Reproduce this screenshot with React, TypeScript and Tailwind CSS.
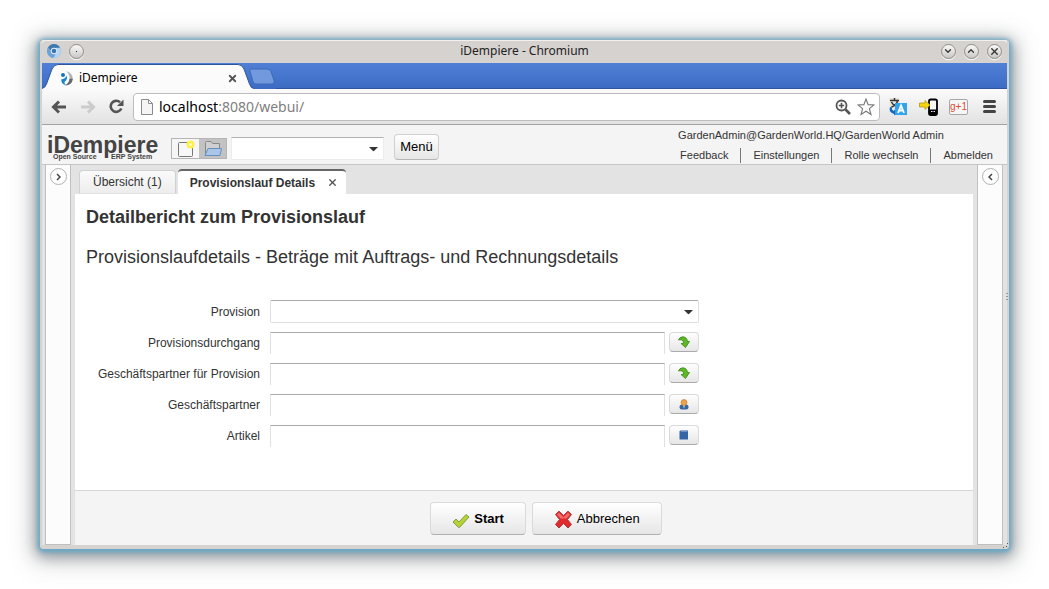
import { useState } from "react";
import type { ReactNode } from "react";
import { ChevronDown, ChevronUp, X } from "lucide-react";

const HEADER_LINKS = ["Feedback", "Einstellungen", "Rolle wechseln", "Abmelden"] as const;

const LOOKUP_FIELDS = [
  { id: "commissionRun", label: "Provisionsdurchgang", icon: "zoom" },
  { id: "commissionPartner", label: "Geschäftspartner für Provision", icon: "zoom" },
  { id: "partner", label: "Geschäftspartner", icon: "partner" },
  { id: "product", label: "Artikel", icon: "product" },
] as const;

function ChromiumIcon() {
  return (
    <svg width="14" height="14" viewBox="0 0 14 14" aria-hidden="true">
      <circle cx="7" cy="7" r="7" fill="#7db0e0" />
      <path d="M1 3.4A7 7 0 0 1 13 3.6L7 4Q4.500 4 4 6.500z" fill="#3f79ad" />
      <path d="M1 3.400L4 8.500Q5.500 10.500 8 10L6.500 14A7 7 0 0 1 1 3.400z" fill="#6ba2da" />
      <path d="M7 4h6.200A7 7 0 0 1 6.500 14L9.800 8.500z" fill="#b4d5f4" />
      <circle cx="7" cy="7" r="3.200" fill="#e4effa" />
      <circle cx="7" cy="7" r="2.300" fill="#3a78b5" />
    </svg>
  );
}

function IdempiereIcon() {
  return (
    <svg width="14" height="16" viewBox="0 0 14 16" aria-hidden="true">
      <circle cx="3" cy="5" r="2" fill="#1374b8" />
      <path d="M1 9.500Q5.500 9 6.500 5.500Q8 9 5 11.500Q3.500 12.500 6 15Q1.500 14 1.500 11z" fill="#1787cc" />
      <path d="M6 1Q13 3 12.800 9Q12 15 5 15.500Q9 13 9.500 9Q9.800 4 6 1z" fill="#b4b6b8" />
      <path d="M9.500 9Q12 8 12.800 9Q12 15 5 15.500Q9 13 9.500 9z" fill="#66696d" />
    </svg>
  );
}

function WindowButton({ label, children }: { label: string; children: ReactNode }) {
  return (
    <button
      type="button"
      aria-label={label}
      className="flex size-[15px] items-center justify-center rounded-full border border-[#8f8c89] bg-linear-to-b from-[#fafafa] to-[#c9c7c5] text-[#333] shadow-[0_1px_1px_#fff]"
    >
      {children}
    </button>
  );
}

function TitleBar() {
  return (
    <div className="flex h-[23px] items-center justify-between rounded-t border-t border-[#f2f1f0] bg-[#d6d2cf] px-[5px] pb-0.5">
      <div className="flex w-16 items-center gap-2">
        <ChromiumIcon />
        <WindowButton label="Anheften">
          <span className="size-px bg-[#222]" />
        </WindowButton>
      </div>
      <span className="text-xs text-[#222]">iDempiere - Chromium</span>
      <div className="flex w-16 items-center justify-end gap-2">
        <WindowButton label="Minimieren">
          <ChevronDown size={10} strokeWidth={3} />
        </WindowButton>
        <WindowButton label="Maximieren">
          <ChevronUp size={10} strokeWidth={3} />
        </WindowButton>
        <WindowButton label="Fenster schließen">
          <X size={11} strokeWidth={3} />
        </WindowButton>
      </div>
    </div>
  );
}

function TabStrip() {
  return (
    <div className="flex h-[26px] bg-linear-to-b from-[#4f80d6] to-[#3d6bc4]">
      <div className="relative w-[212px]">
        <svg className="absolute inset-0" width="212" height="26" viewBox="0 0 212 26" aria-hidden="true">
          <path d="M0 25.500Q3 25 4.500 21L10 6Q12 1.500 16 1.500H196Q200 1.500 202 6L207.500 21Q209 25.500 212 25.500V26H0z" fill="#fbfbfb" />
          <path d="M0 25.500Q3 25 4.500 21L10 6Q12 1.500 16 1.500H196Q200 1.500 202 6L207.500 21Q209 25.500 212 25.500" fill="none" stroke="#2f559f" />
        </svg>
        <div className="relative flex h-full items-center pt-1 pr-4 pl-[18px]">
          <IdempiereIcon />
          <span className="ml-[5px] flex-1 text-xs text-black">iDempiere</span>
          <button type="button" aria-label="Tab schließen" className="text-[#555]">
            <X size={11} strokeWidth={4} />
          </button>
        </div>
      </div>
      <button type="button" aria-label="Neuer Tab" className="-ml-1.5 self-start pt-1">
        <svg width="28" height="20" viewBox="0 0 28 20" aria-hidden="true">
          <path d="M2 2.500Q0.500 .500 3 .500H19Q22 .500 23 3L26 12Q27 15.500 24 15.500H8Q6 15.500 5 13z" transform="translate(0 1.500)" fill="#7298de" stroke="#3d6bb8" />
        </svg>
      </button>
      <div className="flex-1 border-b border-[#2f559f]" />
    </div>
  );
}

function ArrowIcon({ flip }: { flip?: boolean }) {
  return (
    <svg width="16" height="14" viewBox="0 0 16 14" aria-hidden="true" className={flip ? "rotate-180" : ""}>
      <path d="M8 1.500L2.500 7L8 12.500M3 7H15" fill="none" stroke="currentColor" strokeWidth="3" />
    </svg>
  );
}

function BrowserToolbar() {
  const [url, setUrl] = useState("localhost:8080/webui/");
  const slash = url.search(/[:/]/);
  const host = slash < 0 ? url : url.slice(0, slash);

  return (
    <div className="flex h-9 items-center border-b border-[#a3a3a3] bg-linear-to-b from-[#fbfbfb] to-[#e2e2e2] pr-[11px] pl-[9px]">
      <div className="flex items-center gap-[13px]">
        <button type="button" aria-label="Zurück" className="text-[#555]">
          <ArrowIcon />
        </button>
        <button type="button" aria-label="Vorwärts" className="text-[#ccc]">
          <ArrowIcon flip />
        </button>
        <button type="button" aria-label="Neu laden">
          <svg width="15" height="15" viewBox="0 0 15 15" aria-hidden="true">
            <path d="M12.300 9.500A5.500 5.500 0 1 1 11 3.300" fill="none" stroke="#555" strokeWidth="2.600" />
            <path d="M14.500 .500V7H8z" fill="#555" />
          </svg>
        </button>
      </div>
      <div className="ml-[9px] flex h-7 min-w-0 flex-1 items-center rounded border border-[#bdbdbd] bg-white pr-1 pl-[7px]">
        <svg width="12" height="16" viewBox="0 0 12 16" aria-hidden="true" className="shrink-0">
          <path d="M.500 .500H7.500L11.500 4.500V15.500H.500zM7.500 .500V4.500H11.500" fill="#f5f5f5" stroke="#8b8b8b" />
        </svg>
        <div className="relative ml-1.5 h-5 min-w-0 flex-1 text-sm/5 text-[#808080]">
          <span aria-hidden="true">
            <span className="text-black">{host}</span>
            {url.slice(host.length)}
          </span>
          {/* the coloured copy lies under the text box */}
          <input
            aria-label="Adresse"
            value={url}
            onChange={(e) => setUrl(e.target.value)}
            className="absolute inset-0 w-full bg-transparent text-transparent caret-black outline-none"
          />
        </div>
        <button type="button" aria-label="Zoom">
          <svg width="16" height="16" viewBox="0 0 16 16" aria-hidden="true">
            <circle cx="6.500" cy="6.500" r="5" fill="none" stroke="#555" strokeWidth="1.800" />
            <path d="M3.800 6.500H9.200M6.500 3.800V9.200" stroke="#555" strokeWidth="1.600" />
            <path d="M10.500 10.500L15 15" stroke="#555" strokeWidth="2.600" />
          </svg>
        </button>
        <button type="button" aria-label="Lesezeichen" className="ml-1.5">
          <svg width="18" height="18" viewBox="0 0 18 18" aria-hidden="true">
            <path d="M9 1L11.100 6.600L17 6.900L12.400 10.600L14 16.500L9 13.200L4 16.500L5.600 10.600L1 6.900L6.900 6.600z" fill="#fff" stroke="#777" strokeWidth="1.100" />
          </svg>
        </button>
      </div>
      <div className="ml-2 flex items-center gap-[11px]">
        <button type="button" aria-label="Übersetzen">
          <svg width="20" height="19" viewBox="0 0 20 19" aria-hidden="true">
            <path d="M1 1H11L13 12H2z" fill="#e9e6d9" />
            <path d="M2 3.500H11M6.500 1V3.500M3.500 10Q8.500 8 9.500 4M3.500 5Q5.500 9 10.500 10" fill="none" stroke="#333" strokeWidth="1.500" />
            <path d="M2 10Q0 15 6 17V18.500L9 15.500L6 12.500V14Q3.500 13 4 10.500z" fill="#1467ba" />
            <rect x="7" y="6" width="12" height="12" fill="#30a4ee" />
            <path d="M10 16L13 8.500L16 16M11 13.500H15" fill="none" stroke="#fff" strokeWidth="1.800" />
          </svg>
        </button>
        <button type="button" aria-label="An Telefon senden">
          <svg width="19" height="18" viewBox="0 0 19 18" aria-hidden="true">
            <rect x="10" y="1.500" width="8" height="15.500" rx="1.800" fill="#f7f7f7" stroke="#000" strokeWidth="1.800" />
            <path d="M10 11.500H18V17H10z" fill="#000" />
            <path d="M12 13.500H16" stroke="#eee" strokeDasharray="1.500 1" />
            <path d="M.500 5H6V2.500L11 7L6 11.500V9H.500z" fill="#f5d60c" stroke="#b39b14" strokeWidth=".800" />
          </svg>
        </button>
        <button
          type="button"
          aria-label="Google +1"
          className="flex h-4 w-[19px] items-center justify-center rounded-xs border border-[#a8a8a8] bg-[#f6f6f6] font-[Liberation_Sans,sans-serif] text-[10px] leading-none text-[#dd4b39]"
        >
          g+1
        </button>
        <button type="button" aria-label="Chromium-Menü" className="ml-1 flex flex-col gap-0.5">
          <span className="h-[3px] w-[13px] rounded-xs bg-[#444]" />
          <span className="h-[3px] w-[13px] rounded-xs bg-[#444]" />
          <span className="h-[3px] w-[13px] rounded-xs bg-[#444]" />
        </button>
      </div>
    </div>
  );
}

function Caret() {
  return (
    <svg
      width="9"
      height="5"
      viewBox="0 0 9 5"
      aria-hidden="true"
      className="pointer-events-none absolute top-1/2 right-1.5 -translate-y-1/2"
    >
      <path d="M0 .500H9L4.500 5z" fill="#333" />
    </svg>
  );
}

function AppHeader() {
  return (
    <header className="flex h-10 items-stretch border-b border-[#c5c5c5] bg-[#f4f4f4] text-[#333]">
      <div className="pt-2 pl-[5px] font-bold text-[#444]">
        <div className="text-[23px] leading-6">iDempiere</div>
        <div className="-mt-1 flex justify-between px-1.5 text-[7px] leading-2">
          <span>Open Source</span>
          <span>ERP System</span>
        </div>
      </div>
      <div className="mt-[13px] ml-[13px] flex h-[21px] border border-[#b5b5b5]">
        <button type="button" aria-label="Neuer Datensatz" className="flex w-[27px] items-center justify-center bg-[#f6f6f6]">
          <svg width="18" height="18" viewBox="0 0 18 18" aria-hidden="true">
            <rect x="1.500" y="2.500" width="14" height="14" rx="1" fill="#f7f7f7" stroke="#777" />
            <circle cx="13.500" cy="4.500" r="4" fill="#fff04a" />
            <circle cx="13.500" cy="4.500" r="1.500" fill="#fffbd0" />
          </svg>
        </button>
        <button type="button" aria-label="Datensatz öffnen" className="flex w-[27px] items-center justify-center bg-[#c2c2c2]">
          <svg width="20" height="17" viewBox="0 0 20 17" aria-hidden="true">
            <path d="M2.500 15V2.500Q2.500 1.500 3.500 1.500H8L9.500 3.500H16.500V8" fill="#cfcfcf" stroke="#888" />
            <path d="M5 8.500H18.500L17 15.500H2z" fill="#a9c6e8" stroke="#6590c0" />
          </svg>
        </button>
      </div>
      <div className="relative mt-3 ml-1 h-[23px] w-[153px]">
        <select
          aria-label="Menüsuche"
          className="block size-full appearance-none border border-[#ececec] border-t-[#b0b0b0] bg-white px-1 text-xs outline-none"
        >
          <option value="" />
        </select>
        <Caret />
      </div>
      <button
        type="button"
        className="mt-[9px] ml-2.5 h-[26px] rounded border border-[#d0d0d0] border-b-[#b5b5b5] bg-linear-to-b from-white to-[#e6e6e6] px-[5px] text-[13px] text-black"
      >
        Menü
      </button>
      <div className="ml-auto pt-[3px] pr-0.5 text-[11px]">
        <p className="pl-2.5 leading-[15px]">GardenAdmin@GardenWorld.HQ/GardenWorld Admin</p>
        <nav className="mt-[5px] flex divide-x divide-[#777]">
          {HEADER_LINKS.map((link) => (
            <a key={link} href="#" className="px-3 leading-[15px]">
              {link}
            </a>
          ))}
        </nav>
      </div>
    </header>
  );
}

function SidePanel({ label, side }: { label: string; side: "left" | "right" }) {
  return (
    <aside className="flex w-[26px] shrink-0 justify-center border border-t-0 border-[#c0c0c0] bg-[#fcfcfc] pt-[3px]">
      <button
        type="button"
        aria-label={label}
        className="flex size-[17px] items-center justify-center rounded-full border border-[#adb2b2] bg-white"
      >
        <svg width="5" height="8" viewBox="0 0 5 8" aria-hidden="true" className={side === "right" ? "rotate-180" : ""}>
          <path d="M1 1L4 4L1 7" fill="none" stroke="#444" strokeWidth="1.500" />
        </svg>
      </button>
    </aside>
  );
}

function LookupIcon({ icon }: { icon: (typeof LOOKUP_FIELDS)[number]["icon"] }) {
  if (icon === "zoom")
    return (
      <svg width="12" height="12" viewBox="0 0 12 12" aria-hidden="true">
        <path d="M.500 4Q1.500 1 4.500 .800Q9 1 9.500 5.500H11.500L7.500 11.500L3 7.500H5.500Q5.800 4.500 4 4Q2 3.500 .500 4z" fill="#5dba24" stroke="#3c8518" strokeWidth=".800" />
      </svg>
    );
  if (icon === "partner")
    return (
      <svg width="10" height="11" viewBox="0 0 10 11" aria-hidden="true">
        <path d="M.500 8Q.500 5.500 3 5.500H7Q9.500 5.500 9.500 8Q9.500 10.500 7 10.500H3Q.500 10.500 .500 8z" fill="#39659f" />
        <path d="M4 6H6L5 9.500z" fill="#dce8f5" />
        <circle cx="5" cy="3.500" r="3" fill="#eda04b" stroke="#c67c2b" strokeWidth=".600" />
      </svg>
    );
  return (
    <svg width="10" height="10" viewBox="0 0 10 10" aria-hidden="true">
      <path d="M1.500 .500H9V9.500H.500V1.500z" fill="#3465a4" />
      <path d="M2 1.500H8.500" stroke="#6b92c4" />
    </svg>
  );
}

function ParameterForm() {
  return (
    <form id="parameters" className="mt-[33px] flex max-w-[613px] flex-col gap-[9px] text-xs text-[#333]">
      <div className="flex items-center gap-2.5">
        <label htmlFor="commission" className="w-[174px] shrink-0 text-right">
          Provision
        </label>
        <div className="relative h-[23px] flex-1">
          <select
            id="commission"
            className="block size-full appearance-none rounded-xs border border-[#e0e0e0] border-t-[#aaa] bg-white px-1 outline-none"
          >
            <option value="" />
          </select>
          <Caret />
        </div>
      </div>
      {LOOKUP_FIELDS.map((field) => (
        <div key={field.id} className="flex items-center gap-2.5">
          <label htmlFor={field.id} className="w-[174px] shrink-0 text-right">
            {field.label}
          </label>
          <div className="flex min-w-0 flex-1 gap-1">
            <input
              id={field.id}
              type="text"
              className="h-[22px] min-w-0 flex-1 border-x border-t border-[#e0e0e0] border-t-[#aaa] bg-white px-1 outline-none"
            />
            <button
              type="button"
              aria-label={`${field.label} suchen`}
              className="flex h-5 w-[30px] items-center justify-center rounded-sm border border-[#dadada] border-b-[#aaa] bg-linear-to-b from-[#fefefe] to-[#e6e6e6]"
            >
              <LookupIcon icon={field.icon} />
            </button>
          </div>
        </div>
      ))}
    </form>
  );
}

function ActionBar() {
  const buttonClass =
    "flex h-[33px] items-center gap-1 rounded border border-[#dadada] border-b-[#b0b0b0] bg-linear-to-b from-white to-[#e6e6e6] px-[21px] text-[13px] text-black";

  return (
    <footer className="flex h-[55px] shrink-0 justify-center gap-1.5 border-t border-[#d5d5d5] bg-[#f4f4f4] pt-[11px] pl-11">
      <button type="submit" form="parameters" className={buttonClass}>
        <svg width="18" height="16" viewBox="0 0 18 16" aria-hidden="true" className="mt-1">
          <path d="M1 9L4 6L7 9L14 1.500L17 4L7.500 14.500H6.500z" fill="#b5d334" stroke="#859c45" strokeLinejoin="round" />
        </svg>
        <span className="font-bold">Start</span>
      </button>
      <button type="button" className={buttonClass}>
        <svg width="19" height="19" viewBox="0 0 19 19" aria-hidden="true" className="mt-0.5">
          <path d="M1.500 4.500L5 1.200L9.500 5.500L14 1.200L17.500 4.500L13.500 9.500L17.500 14.500L14 18L9.500 13.500L5 18L1.500 14.500L5.500 9.500z" fill="#e3292d" stroke="#a93a3a" strokeLinejoin="round" />
          <path d="M3 4.500L5 2.800L9.500 7.200L14 2.800L16 4.500L12.500 8.500H6.500z" fill="#f26a6a" />
        </svg>
        <span>Abbrechen</span>
      </button>
    </footer>
  );
}

function Workspace() {
  return (
    <div className="flex min-h-0 flex-1 bg-[#e3e3e3] pr-1 pl-[3px]">
      <SidePanel side="left" label="Menü einblenden" />
      <main className="mr-1 ml-1 flex min-w-0 flex-1 flex-col">
        <div className="flex h-[29px] shrink-0 items-end gap-0.5 pl-1 text-xs text-[#333]">
          <button
            type="button"
            className="mb-px h-[23px] rounded-t-sm border border-b-0 border-[#d0d0d0] bg-linear-to-b from-[#fafafa] to-[#ededed] px-[13px]"
          >
            Übersicht (1)
          </button>
          <div className="flex h-[25px] items-center rounded-t border-t-2 border-[#666] bg-white pr-2 pl-3">
            <span className="font-bold">Provisionslauf Details</span>
            <button type="button" aria-label="Registerkarte schließen" className="ml-3 text-[#555]">
              <X size={11} strokeWidth={3} />
            </button>
          </div>
        </div>
        <section className="flex-1 bg-white px-[11px] pt-[13px]">
          <h1 className="text-lg/5 font-bold text-[#333]">Detailbericht zum Provisionslauf</h1>
          <p className="mt-5 text-lg/5 text-[#333]">
            Provisionslaufdetails - Beträge mit Auftrags- und Rechnungsdetails
          </p>
          <ParameterForm />
        </section>
        <ActionBar />
      </main>
      <SidePanel side="right" label="Hilfe einblenden" />
    </div>
  );
}

export default function App() {
  return (
    <div className="flex min-h-screen bg-white p-10 font-[Noto_Sans,sans-serif]">
      <div className="relative flex min-w-0 flex-1 flex-col rounded border-x-2 border-b-4 border-[#d6d2cf] shadow-[0_1px_4px_2px_#66a8c8,0_4px_14px_4px_#53616d88,0_5px_24px_8px_#55555544]">
        <TitleBar />
        <TabStrip />
        <BrowserToolbar />
        <div className="flex flex-1 flex-col font-[Liberation_Sans,Arial,sans-serif]">
          <AppHeader />
          <Workspace />
        </div>
        {/* splitter dots and resize corner of the window frame */}
        <svg width="3" height="8" viewBox="0 0 3 8" aria-hidden="true" className="absolute top-1/2 -right-0.5">
          <path d="M0 0h2v1H0zM0 3h2v1H0zM0 6h2v1H0z" fill="#999" />
        </svg>
        <svg width="6" height="6" viewBox="0 0 6 6" aria-hidden="true" className="absolute -right-0.5 -bottom-1">
          <path d="M0 4h1v1H0zM3 3h1v1H3zM4 0h1v1H4z" fill="#555" />
        </svg>
      </div>
    </div>
  );
}
